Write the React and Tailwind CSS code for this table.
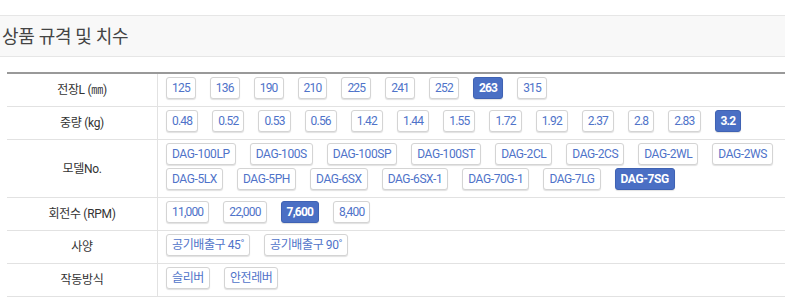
import React from 'react';

const rows = [
  { label: '전장L (㎜)', items: ['125', '136', '190', '210', '225', '241', '252', '263', '315'], active: '263' },
  {
    label: '중량 (kg)',
    items: ['0.48', '0.52', '0.53', '0.56', '1.42', '1.44', '1.55', '1.72', '1.92', '2.37', '2.8', '2.83', '3.2'],
    active: '3.2',
  },
  {
    label: '모델No.',
    items: [
      'DAG-100LP', 'DAG-100S', 'DAG-100SP', 'DAG-100ST', 'DAG-2CL', 'DAG-2CS', 'DAG-2WL', 'DAG-2WS',
      'DAG-5LX', 'DAG-5PH', 'DAG-6SX', 'DAG-6SX-1', 'DAG-70G-1', 'DAG-7LG', 'DAG-7SG',
    ],
    active: 'DAG-7SG',
  },
  { label: '회전수 (RPM)', items: ['11,000', '22,000', '7,600', '8,400'], active: '7,600' },
  { label: '사양', items: ['공기배출구 45˚', '공기배출구 90˚'], active: null },
  { label: '작동방식', items: ['슬리버', '안전레버'], active: null },
];

const font = { fontFamily: 'Roboto, "Noto Sans CJK KR", sans-serif' };

// digit-only values sit a bit tighter than the model names
const isNum = (t) => /^[\d.,]+$/.test(t);

const Chip = ({ text, on }) => (
  <button
    type="button"
    className={`h-[22px] px-[5px] mb-[3px] rounded-[3px] border text-[12px] leading-[20px] shadow-[0_1px_1px_rgba(0,0,0,0.12)] ${
      isNum(text) ? 'tracking-[-0.8px]' : 'tracking-[-0.4px]'
    } ${on ? 'bg-[#4a6fc4] border-[#3f62b3] text-white font-bold' : 'bg-white border-[#d4d4d4] text-[#4f73c9]'}`}
  >
    {text}
  </button>
);

export default function App() {
  return (
    <div className="w-[785px] h-[303px] overflow-hidden bg-white pt-[15px] text-[#333]" style={font}>
      <div className="h-[42px] border-y border-[#e6e6e6] bg-[#f8f8f8] flex items-center pl-[2px]">
        <h2 className="text-[18px] text-[#444] tracking-[-0.3px]">상품 규격 및 치수</h2>
      </div>

      <div className="mt-[15px] ml-[7px] border-t-2 border-[#999]">
        {rows.map((r) => (
          <div key={r.label} className="flex border-b border-[#e2e2e2]">
            <div className="w-[151px] shrink-0 border-r border-[#e2e2e2] flex items-center justify-center text-[12px] tracking-[-0.3px]">
              {r.label}
            </div>
            <div className="flex-1 flex flex-wrap gap-x-[14px] pl-[8px] pt-[3px] pb-[4px]">
              {r.items.map((it) => (
                <Chip key={it} text={it} on={it === r.active} />
              ))}
            </div>
          </div>
        ))}
      </div>
    </div>
  );
}
